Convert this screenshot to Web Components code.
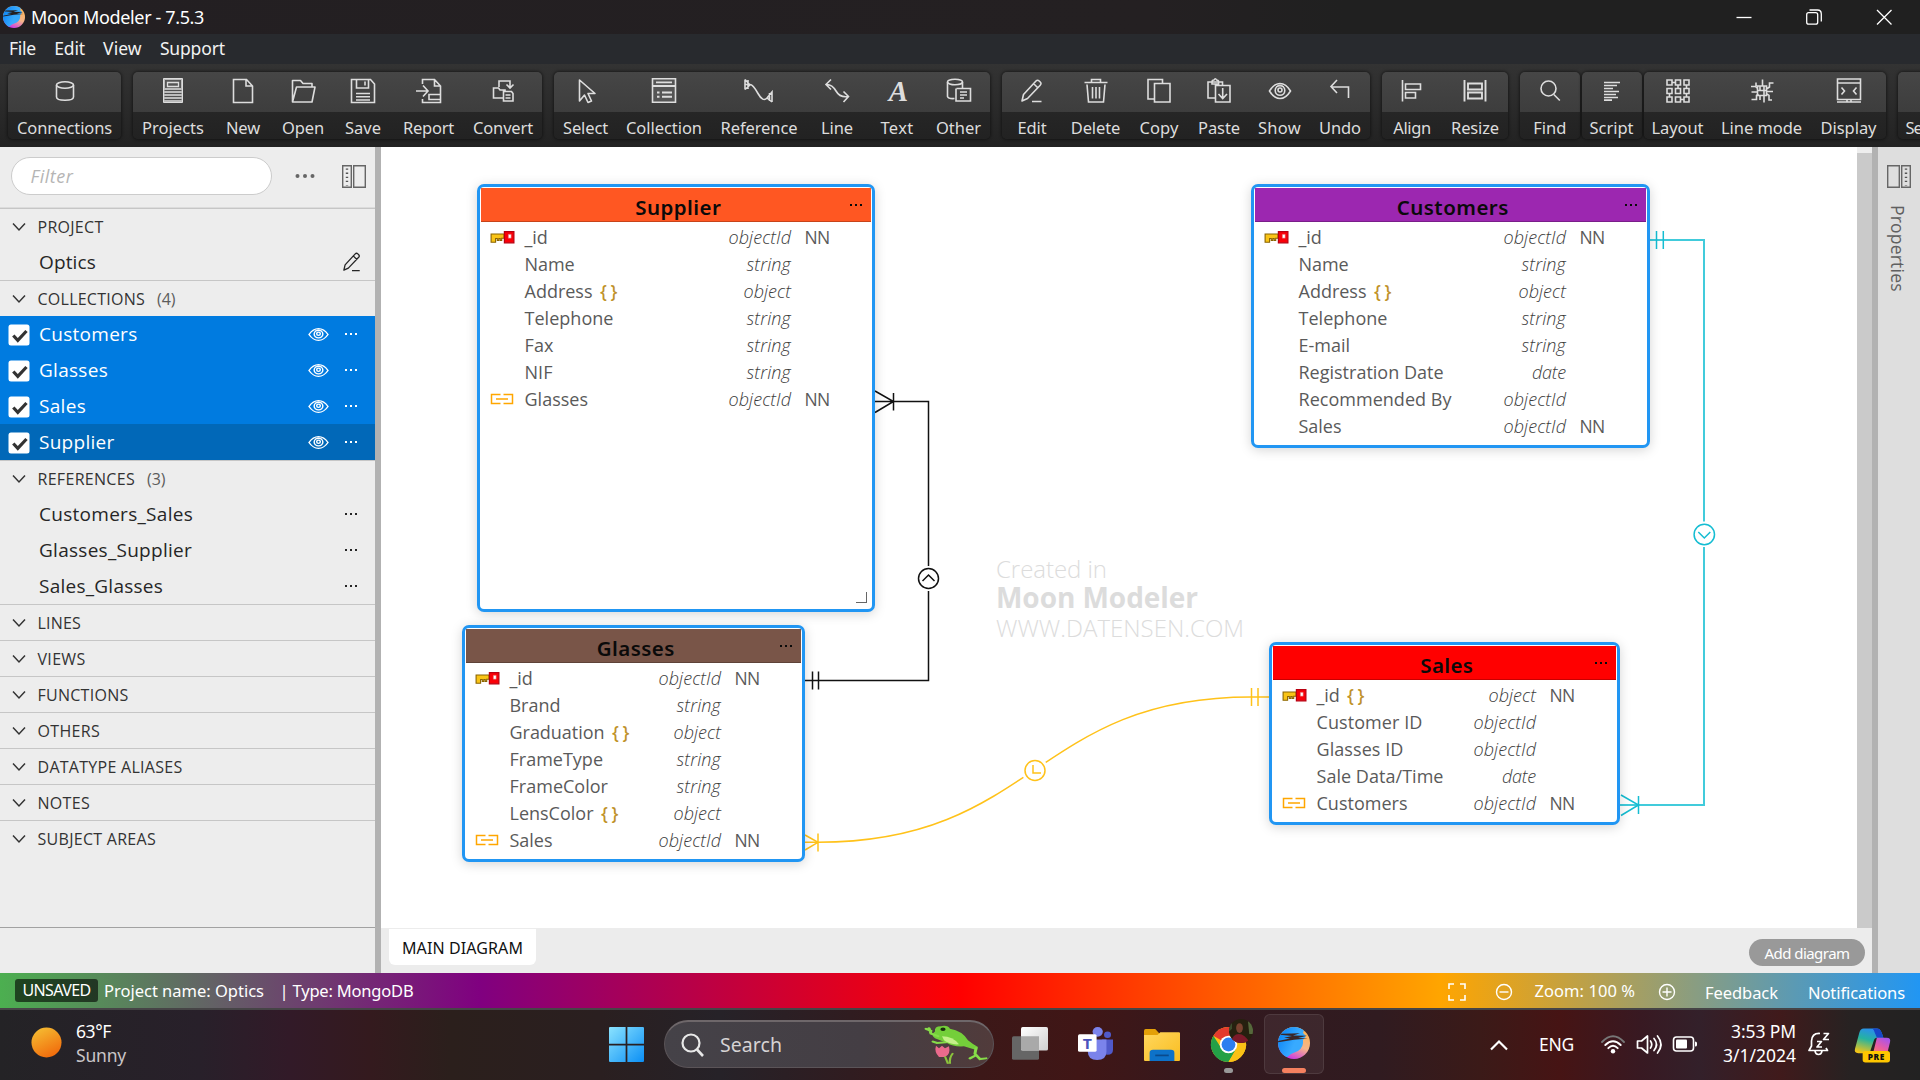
<!DOCTYPE html>
<html lang="en">
<head>
<meta charset="utf-8">
<title>Moon Modeler</title>
<style>
html,body{margin:0;padding:0;width:1920px;height:1080px;overflow:hidden;font-family:"Noto Sans","Open Sans",sans-serif;background:#222}
</style>
</head>
<body>
<moon-app></moon-app>
<script>
const define = (name, html, extra) => {
  const tpl = document.createElement('template');
  tpl.innerHTML = html;
  customElements.define(name, class extends HTMLElement {
    connectedCallback() {
      if (this.shadowRoot) return;
      const root = this.attachShadow({mode: 'open'});
      root.appendChild(tpl.content.cloneNode(true));
      if (extra) extra.call(this, root);
    }
  });
};

/* Text with a fixed advance width: tracking is spread over its characters. */
define('t-x', `<style>:host{display:inline-block;white-space:pre;flex:none}span{display:inline-block;white-space:pre}</style><span><slot></slot></span>`, function (root) {
  const w = parseFloat(this.getAttribute('w'));
  if (!w) return;
  const s = root.querySelector('span');
  const n = this.textContent.length;
  const nat = s.getBoundingClientRect().width;
  this.style.width = w + 'px';
  s.style.letterSpacing = ((w - nat) / n).toFixed(3) + 'px';
});

const moon = bg => `<defs><linearGradient id="ma" x1="0" y1=".2" x2="1" y2=".7"><stop offset="0" stop-color="#0a84f5"/><stop offset=".6" stop-color="#38aaff"/></linearGradient><linearGradient id="mb" x1=".8" y1="0" x2=".35" y2="1"><stop offset="0" stop-color="#ffb54d"/><stop offset=".55" stop-color="#f7b58a"/><stop offset="1" stop-color="#c832ea"/></linearGradient><clipPath id="mc"><circle cx="16" cy="16" r="16"/></clipPath></defs>
<g clip-path="url(#mc)"><path d="M0 0h32v32H0z" fill="url(#mb)"/><path d="M0 0H27L25 6 28 9 25 13Q26 20 20 24L13 27 8 31 0 32Z" fill="url(#ma)"/><path d="M0 6l4 .7 18-.4-7 2.200 14 .2-9 2.200 10 .7-14 1.200L0 15.300v-1.300l12-2.500-6-.8 8-1.800L0 7.600z" fill="${bg}"/></g>`;

const L = 'fill="none" stroke="currentColor" stroke-width="1.6"';
const pencil = `<g ${L} stroke-linejoin="round"><path d="M6 26l1.500-6.500L20 6q1.500-1.600 3.200 0l1 1q1.600 1.600 0 3.200L11.500 23.500 6 26zM17.500 8.500l4.500 4.500M16 26.500h9.500"/></g>`;
const eye = `<g ${L}><path d="M5.500 16Q10 8.500 16 8.500T26.500 16Q22 23.500 16 23.500T5.500 16Z"/><circle cx="16" cy="15.500" r="4.800"/><circle cx="16" cy="15" r="2"/><path d="M12 12q4-4 8 0" stroke-width="1"/></g>`;
const panel = `<g fill="none" stroke="#666" stroke-width="1.400"><path d="M4.700 5.700h8.600v21.600H4.700zM15.700 5.700h11.600v21.600H15.700z"/><path d="M9 8.500v17" stroke="#555" stroke-width="2.400" stroke-dasharray="1.300 2.800"/></g>`;
const ICONS = {
  moon: moon('#231f22'), moont: moon('#3a2526'),
  db: `<g ${L}><ellipse cx="16" cy="10" rx="8.500" ry="3.300"/><path d="M7.500 10v12q0 3.300 8.500 3.300t8.500-3.300V10"/></g>`,
  projects: `<path d="M6.500 3.500h19v24h-19z" fill="#bbb" stroke="#ddd" stroke-width="1"/><path d="M8 5h16v8H8z" fill="#555"/><path d="M10.500 7.500h11v4h-11z" fill="none" stroke="#ddd" stroke-width="1.300"/><path d="M7.500 15.500h17M7.500 18.500h17M7.500 21.500h17M7.500 24.500h17" stroke="#505050" stroke-width="1"/>`,
  new: `<g ${L}><path d="M6.500 4.500h13l6 6.500v16.500h-19zM19 4.500V11h6.500"/></g>`,
  open: `<g ${L} stroke-linejoin="round"><path d="M5.500 27V5.500h8l2.500 3h9V12M5.500 27l4-15h18.500l-3 15H5.500z"/></g>`,
  save: `<g ${L}><path d="M4.500 4.500h19L27.500 9v18.500h-23zM9.500 4.500v8.500h12V4.500M9 18.500h14M9 21.700h14M9 25h14" /><path d="M18 6.500v4"/></g>`,
  report: `<g ${L}><path d="M9.500 9V4.500h12l6 6.500v16.500h-18V24M21.500 4.500V11h6M16 19.500h11.500v5H16zM3 16h11M10 10.500l5 5.500-5 5.500"/></g>`,
  convert: `<g ${L}><path d="M12 12V6h11v6M19.500 9.500L23 13l3.500-3.500M16 23H6.500V13h5l1.500 2h5v2M16.500 16.500h8l1.500 2v7.500h-9.500zM18.500 20h5M18.500 23h5"/></g>`,
  select: `<g ${L} stroke-linejoin="round"><path d="M9.500 5v21l5-6 3.500 7.500 3.500-1.500-3.500-7.500h7z"/></g>`,
  collection: `<g ${L}><path d="M4.500 3.700h23v23.600h-23z" fill="#555"/><path d="M4.500 11h23M8 7.300h16" stroke-width="1.800"/><path d="M14 17.500h10M14 21.700h10M9 17.500h2.500M9 21.700h2.500" stroke-width="2"/></g>`,
  reference: `<g ${L}><path d="M2 4.500v10M2 4.500l5 5.500M2 14.500L7 10M2 9.500h5q3 0 8 9t9 4.500L29 17v10M24 23l5 4M5 5v9M26.500 18v8"/></g>`,
  line: `<g ${L}><path d="M10 4.500L5 9.500l5 5M5 9.500q6-.5 10 6.500t12.500 5.500M22.500 16.500l5 5-5 5.500"/></g>`,
  text: `<text x="17.500" y="25.500" text-anchor="middle" font-family="Liberation Serif,serif" font-weight="bold" font-style="italic" font-size="29" fill="#ddd">A</text>`,
  other: `<g ${L}><ellipse cx="12" cy="7" rx="7.500" ry="2.800"/><path d="M4.500 7v14.500q1 2.500 7 2M19.500 7v6M13.500 13.500h14v12.500H13v-12.500M17 17h7M17 20h7M17 23h4"/></g>`,
  edit: pencil, eye,
  trash: `<g ${L}><path d="M4.500 7.500h23M11.500 7V4.500h9V7M7 9.500l1.500 17.500h15L25 9.500M12.500 12v11.500M16 12v11.500M19.500 12v11.500" /></g>`,
  copy: `<g ${L}><path d="M11.500 24h-6.500V4.500h14.500V8M11.500 8.500h15.500v18.500h-15.500z"/></g>`,
  paste: `<g ${L}><path d="M13 23H5V7h14.500v3M9 7q0-2 2-2 1.300-2.500 2.600 0 2 0 2 2v2H9zM12.500 10.500H27V27H12.500zM19.700 13v10M15.500 19l4.200 4.500L24 19"/></g>`,
  undo: `<g ${L}><path d="M13 5l-6 6.500 6 6.500M7.500 12H24.500v11"/></g>`,
  align: `<g ${L}><path d="M6.500 5v21.500M9.500 9h15v5.500h-15zM9.500 17.500h10v5.500h-10z"/></g>`,
  resize: `<g ${L}><path d="M5.500 5v21.500M26.500 5v21.500M9 8.500h14v6H9zM9 17.500h14v6H9z" stroke-width="1.900"/></g>`,
  find: `<g ${L}><circle cx="14.500" cy="13.500" r="7.500"/><path d="M19.800 19.500l6 6"/></g>`,
  script: `<path d="M8 7.500h16M8 10.500h13M8 13.500h9M8 16.500h15M8 19.500h12M8 22.500h14M8 25.200h8" stroke="#ddd" stroke-width="1.700"/>`,
  layout: `<g ${L} stroke-width="1.800"><path d="M5 5h5v5H5zM13.500 5h5v5h-5zM22 5h5v5h-5zM5 13.500h5v5H5zM13.500 13.500h5v5h-5zM22 13.500h5v5h-5zM5 22h5v5H5zM13.500 22h5v5h-5zM22 22h5v5h-5zM10 7.500h3.500M18.500 24.500H22M16 10v3.500M24.500 10v3.500M7.500 18.500V22M24.500 18.500V22"/></g>`,
  mode: `<g ${L}><path d="M11.500 11h9v9.500h-9zM16.500 4.500v6M5 11.500h4.500l2 2M10 11V7.500M27.500 8h-4v4l-3 2M5.500 17h6M27 16.500h-6.500M5.500 24.500h5v-4l2-1.500M26 25h-3v-4.500l-2.500-2M14 20.500V25M18 20.500V27.500M12 15.500h8M14 11v4M18 11v9"/></g>`,
  display: `<g ${L}><path d="M4.500 4h23v20.500h-23zM4.500 8h23M4 27h24M14 24.500V27M18 24.500V27" /><path d="M8.500 12.500l3 3.500-3 3.500M23.500 12.500l-3 3.500 3 3.500"/></g>`,
  panel,
  panelr: `<g transform="translate(32 0) scale(-1 1)">${panel}</g>`,
  chev: `<path d="M10 12.500l6 6.500 6-6.500" fill="none" stroke="#333" stroke-width="1.500"/>`,
  dots: `<g fill="currentColor"><path d="M10 15h2v2h-2zM15 15h2v2h-2zM20 15h2v2h-2z"/></g>`,
  more: `<g fill="#666"><circle cx="8.500" cy="16" r="2"/><circle cx="16" cy="16" r="2"/><circle cx="23.500" cy="16" r="2"/></g>`,
  check: `<rect x="5.500" y="5.500" width="21" height="21" rx="2.500" fill="#fff"/><path d="M10.300 16.500l4.500 4.800 8.700-9.300" fill="none" stroke="#333" stroke-width="3.200"/>`,
  key: `<path d="M5.100 13h13v4.200h-2.400v2.300h-1.500v-2h-1.400v2h-1.500v-2H9.600v3.800H5.100z" fill="#f9c416" stroke="#8a6400" stroke-width="1.100"/><path d="M18.400 10.600h9.500v11.200h-9.500z" fill="#fa0008" stroke="#b80010" stroke-width="1.200"/><path d="M22.300 13.300h2.900v3.900h-2.900z" fill="#fff" stroke="#d55" stroke-width=".5"/>`,
  link: `<path d="M14.500 11.500H5.500v9h9M17.500 11.500h9v9h-9M10 16h12" fill="none" stroke="#ffa600" stroke-width="1.500"/>`,
  win: `<defs><linearGradient id="w" x1="0" y1="0" x2="1" y2="1"><stop offset="0" stop-color="#8be3ff"/><stop offset="1" stop-color="#0b8ff5"/></linearGradient></defs><path d="M0 1q0-1 1-1h14.200v15.200H0zM16.800 0H31q1 0 1 1v14.200H16.800zM0 16.800h15.200V32H1q-1 0-1-1zM16.800 16.800H32V31q0 1-1 1H16.800z" fill="url(#w)"/>`,
  expand: `<path d="M8 13V8h5M19 8h5v5M24 19v5h-5M13 24H8v-5" fill="none" stroke="#fff" stroke-width="1.600"/>`,
  minus: `<g fill="none" stroke="#fff" stroke-width="1.400"><circle cx="16" cy="16" r="7.500"/><path d="M11.500 16h9"/></g>`,
  plus: `<g fill="none" stroke="#fff" stroke-width="1.400"><circle cx="16" cy="16" r="7.500"/><path d="M11.500 16h9M16 11.500v9"/></g>`,
  sun: `<defs><linearGradient id="s" x1=".2" y1="0" x2=".7" y2="1"><stop offset="0" stop-color="#f5bd32"/><stop offset="1" stop-color="#f1690b"/></linearGradient></defs><circle cx="16" cy="16" r="15.500" fill="url(#s)"/>`,
  taskview: `<defs><linearGradient id="tv" x1="0" y1="0" x2="1" y2="1"><stop offset="0" stop-color="#fff"/><stop offset="1" stop-color="#cfcfcf"/></linearGradient></defs><rect y="8.500" width="24" height="21.500" rx="1.500" fill="#666"/><rect x="8" y="0" width="24" height="21.500" rx="1.500" fill="url(#tv)"/><path d="M8 8.500h16v13H9.500q-1.500 0-1.500-1.500z" fill="#a9a9a9"/>`,
  teams: `<circle cx="27" cy="7.500" r="3.200" fill="#5059c9"/><circle cx="18" cy="4.700" r="4.700" fill="#7b83eb"/><path d="M22 12h10v10q0 5-5 5t-5-5z" fill="#5059c9"/><path d="M9 12h17v12q0 8-8.500 8T9 24z" fill="#7b83eb"/><rect y="7" width="17" height="17" rx="1.500" fill="#fff"/><text x="8.500" y="21" text-anchor="middle" font-family="Open Sans,sans-serif" font-weight="700" font-size="14.500" fill="#4b53bc">T</text>`,
  folder: `<defs><linearGradient id="f" x1="0" y1="0" x2="1" y2="1"><stop offset="0" stop-color="#ffd75e"/><stop offset="1" stop-color="#f9bd20"/></linearGradient></defs><path d="M0 2.500Q0 1 1.500 1H10l3.500 4v3H0z" fill="#e3a008"/><path d="M0 6.500h12L14.500 4H31q1 0 1 1v25q0 1-1 1H1q-1 0-1-1z" fill="url(#f)"/><path d="M5 31v-7.500Q5 20.500 8 20.500h16q3 0 3 3V31z" fill="#0d72c9"/><path d="M10 25.800h12" stroke="#0a4a8c" stroke-width="1.600"/>`,
  chrome: `<circle cx="16" cy="16" r="16" fill="#fbc116"/><path d="M16 16L2.100 8A16 16 0 0 1 29.900 8z" fill="#e33b2e"/><path d="M2.100 8A16 16 0 0 0 16 32l7-12-7 3.500-6.500-4z" fill="#23a047"/><path d="M29.900 8H16l7 12-7 12A16 16 0 0 0 29.900 8z" fill="#fbc116"/><circle cx="16" cy="16" r="8" fill="#fff"/><circle cx="16" cy="16" r="6.300" fill="#2d7ff0"/>`,
  avatar: `<clipPath id="av"><circle cx="16" cy="16" r="16"/></clipPath><g clip-path="url(#av)"><path d="M0 0h32v32H0z" fill="#26200f"/><path d="M25 0h7v20h-5z" fill="#56683c"/><path d="M0 4l4-3v12l-4 4z" fill="#3b4a2b"/><ellipse cx="14" cy="12" rx="4.500" ry="6.500" fill="#7a4230"/><path d="M2 32Q5 20 13 20t15 12z" fill="#7c1a2a"/></g>`,
  up: `<path d="M8 20.500l8-8 8 8" fill="none" stroke="#fff" stroke-width="2.200"/>`,
  wifi: `<g fill="none" stroke-width="1.900" stroke-linecap="round"><path d="M5 14Q16 2.500 27 14" stroke="#777"/><path d="M8.300 17Q16 9.500 23.700 17M11.300 20.200Q16 15.500 20.700 20.200" stroke="#fff"/></g><circle cx="16" cy="23.300" r="2.200" fill="#fff"/>`,
  sound: `<g fill="none" stroke="#fff" stroke-width="1.700" stroke-linejoin="round" stroke-linecap="round"><path d="M4.500 13h4l6-5v17l-6-5h-4zM17.500 13q2.500 3.500 0 7M21 10.500q5 6 0 12M24.500 8q7 8.500 0 17"/></g>`,
  battery: `<rect x="4.500" y="9" width="20" height="14" rx="3" fill="none" stroke="#fff" stroke-width="1.600"/><rect x="7" y="11.500" width="11" height="9" rx="1" fill="#fff"/><path d="M26 13.500q2 0 2 1.500v2q0 1.500-2 1.500z" fill="#fff"/>`,
  bell: `<g fill="none" stroke="#fff" stroke-width="1.700" stroke-linejoin="round"><path d="M17 5.500Q9 5 8.500 13v5L6 22.500h18.500L23 20M12 23q.5 3.500 3.500 3.500T19 23M14 13.500h4.500l-4.500 5.500h5M20.500 5.500h5l-5 6h5.500"/></g>`,
  copilot: `<defs><linearGradient id="c1" x1=".6" y1="0" x2=".3" y2="1"><stop offset="0" stop-color="#2a8cf0"/><stop offset=".45" stop-color="#25b3a0"/><stop offset="1" stop-color="#f3c416"/></linearGradient><linearGradient id="c2" x1=".8" y1="0" x2=".2" y2="1"><stop offset="0" stop-color="#a654ee"/><stop offset=".5" stop-color="#e85ba5"/><stop offset="1" stop-color="#ff8a50"/></linearGradient></defs><path d="M8 .5h12q3 0 4.500 4L26 9h-6q-2 0-3 3l-3 9q-1 2-3 2H3q-4 0-3-4L4 4Q5 .5 8 .5z" fill="url(#c1)"/><path d="M16 .5h4q3 0 4.500 4L26 9h-6l-2-5q-.5-2-2-3.500z" fill="#1746c8"/><path d="M20 9h9q4 0 3 4l-2 8q-1 4-5 4H13q3 0 4-4z" fill="url(#c2)"/><rect x="7" y="21" width="25" height="10.500" rx="2.500" fill="#ffc700"/><text x="19.500" y="29" text-anchor="middle" font-family="Open Sans,sans-serif" font-weight="800" font-size="7.600" letter-spacing=".5" fill="#111">PRE</text>`,
  frog: `<g transform="translate(0 -1) scale(.533 .58)"><path d="M14 48q-5-8-3-17l3 4 3-4 3 4 4-3q2 12-4 16z" fill="#ea6a8c"/><path d="M20 47L23 58M25 58q-1-9 3-16" stroke="#8bc33c" stroke-width="2.200" fill="none"/><path d="M10 10Q9 2 16 2q7-2 9 4 12 3 18 17 4 5 10 10l-1 5-13-6q-11 1-17-5L10 20q-5-5 0-10z" fill="#74cf3a"/><path d="M13 17L6 13 4 5M6 9L1 6M21 26l-9 1-4-2M51 35l-1 8 5 8 6-1M50 46l-5 4" stroke="#86dc48" stroke-width="3" fill="none" stroke-linecap="round"/><path d="M17 17q11 0 17 12-9 1-15-6z" fill="#c5f08a"/><circle cx="18" cy="6.500" r="2.600" fill="#192d0c"/></g>`,
  min: `<path d="M8.500 16.500h15" stroke="#fff" stroke-width="1.300"/>`,
  restore: `<g fill="none" stroke="#fff" stroke-width="1.300"><rect x="8.700" y="11.700" width="11" height="11.500" rx="2"/><path d="M11.500 9h8Q23.300 9 23.300 13v7.500"/></g>`,
  close: `<path d="M9 9l14.500 14.500M23.500 9L9 23.500" stroke="#fff" stroke-width="1.300"/>`
};
define('ui-icon', `<style>:host{display:block;flex:none;line-height:0}svg{display:block;overflow:visible}</style>`, function (root) {
  const w = this.getAttribute('size') || 32, h = this.getAttribute('h') || w;
  const box = document.createElement('div');
  box.innerHTML = `<svg width="${w}" height="${h}" viewBox="0 0 32 32" preserveAspectRatio="none">${ICONS[this.getAttribute('name')]}</svg>`;
  root.appendChild(box.firstChild);
});

define('title-bar', `<style>
:host{display:flex;height:34px;background:linear-gradient(90deg,#231f22 0,#242022 60%,#202020 70%);color:#fff;font-size:18px;line-height:35px;align-items:center}
.l{margin-left:3px}.t{margin-left:6px}.s{flex:1}.w{display:flex;gap:38px;margin-right:20.500px}
</style><ui-icon class="l" name="moon" size="22"></ui-icon><t-x class="t" w="173">Moon Modeler - 7.5.3</t-x><div class="s"></div>
<div class="w"><ui-icon name="min"></ui-icon><ui-icon name="restore"></ui-icon><ui-icon name="close"></ui-icon></div>`);

define('menu-bar', `<style>:host{display:flex;height:30px;background:#282a2e;color:#f2f2f2;font-size:17.500px;line-height:29px;padding-left:9px;box-sizing:border-box;gap:18.300px}</style>
<t-x w="27">File</t-x><t-x w="30.500">Edit</t-x><t-x w="38.500">View</t-x><t-x w="65">Support</t-x>`);

define('tool-group', `<style>:host{display:flex;flex:none;height:67px;border-radius:5px;overflow:hidden;background:linear-gradient(#464646,#3d3d3d 40px,#262626 40px,#222);box-shadow:0 0 3px 1px rgba(0,0,0,.45)}</style><slot></slot>`);
define('tool-item', `<style>:host{display:flex;flex-direction:column;align-items:center;flex:none;color:#ddd}ui-icon{margin-top:3px}
.l{margin-top:7px;font-size:16.500px;line-height:27px;height:25px}</style><ui-icon></ui-icon><div class="l"><t-x></t-x></div>`, function (root) {
  this.style.width = this.getAttribute('cell') + 'px';
  const i = document.createElement('ui-icon'); i.setAttribute('name', this.getAttribute('icon'));
  root.querySelector('ui-icon').replaceWith(i);
  const t = document.createElement('t-x'); t.setAttribute('w', this.getAttribute('w')); t.textContent = this.getAttribute('label');
  root.querySelector('t-x').replaceWith(t);
});
const groups = [
  [12, [['Connections', 'db', 113, 95]]],
  [12, [['Projects', 'projects', 80, 62], ['New', 'new', 60, 34], ['Open', 'open', 60, 42], ['Save', 'save', 60, 36], ['Report', 'report', 71, 51], ['Convert', 'convert', 78, 60]]],
  [12, [['Select', 'select', 63, 45], ['Collection', 'collection', 94, 76], ['Reference', 'reference', 96, 77], ['Line', 'line', 60, 32], ['Text', 'text', 60, 33], ['Other', 'other', 63, 45]]],
  [12, [['Edit', 'edit', 60, 29], ['Delete', 'trash', 67, 49.500], ['Copy', 'copy', 60, 39], ['Paste', 'paste', 60, 42], ['Show', 'eye', 61, 43], ['Undo', 'undo', 60, 42]]],
  [12, [['Align', 'align', 60, 37.500], ['Resize', 'resize', 66, 48]]],
  [2, [['Find', 'find', 59.500, 33]]],
  [2, [['Script', 'script', 60, 44]]],
  [12, [['Layout', 'layout', 68, 52], ['Line mode', 'mode', 100, 81], ['Display', 'display', 74, 56]]],
  [0, []]
];
define('tool-bar', `<style>:host{display:flex;height:83px;box-sizing:border-box;padding:8px 0 0 8px;background:linear-gradient(#333,#222);overflow:hidden}</style>` +
  groups.map(([gap, items], gi) => `<tool-group style="margin-right:${gap}px">` + (gi === 8 ? `<div style="width:60px;padding:42px 0 0 8px;font-size:16.500px;line-height:27px;color:#ddd;white-space:nowrap"><t-x w="16.500">Se</t-x></div>` :
    items.map(([l, i, c, w]) => `<tool-item label="${l}" icon="${i}" cell="${c}" w="${w}"></tool-item>`).join('')) + `</tool-group>`).join(''));

define('side-section', `<style>:host{display:block}
.h{display:flex;align-items:center;height:36px;box-sizing:border-box;border-top:1px solid var(--line,#c6c6c6);font-size:16px;line-height:35px;color:#333;font-family:"Open Sans","Noto Sans",sans-serif}
ui-icon{margin-left:2.500px;margin-right:3px}.t{display:flex;padding-top:1px;height:34px}.c{margin-left:12px;color:#5c5c5c}</style>
<div class="h"><ui-icon name="chev"></ui-icon><div class="t"><slot name="t"></slot><span class="c"></span></div></div><slot></slot>`, function (root) {
  root.querySelector('.c').textContent = this.getAttribute('count') || '';
});
define('side-item', `<style>:host{display:flex;height:36px;align-items:center;font-size:19px;line-height:37px;color:#262626;font-family:"Open Sans","Noto Sans",sans-serif;box-sizing:border-box}
:host([sel]){background:#007be0;color:#fff;font-weight:500;--sw:2}:host([cur]){background:#0168b8}
.k{width:39px;flex:none}.k ui-icon{margin-left:2.500px;margin-top:1px}.t{height:36px}.s{flex:1}.r{display:flex;align-items:center}.e{margin-right:1px}</style>
<div class="k"></div><div class="t"><slot></slot></div><div class="s"></div><div class="r"></div>`, function (root) {
  const sel = this.hasAttribute('sel');
  if (sel) root.querySelector('.k').innerHTML = '<ui-icon name="check"></ui-icon>';
  root.querySelector('.r').innerHTML = this.hasAttribute('pen') ? '<ui-icon name="edit" size="26" style="margin-right:10.500px;margin-top:-1px"></ui-icon>' :
    (sel ? '<ui-icon name="eye" size="29" h="25" style="margin-right:2px"></ui-icon>' : '') + '<ui-icon name="dots" style="margin-right:8.500px;margin-top:-1px"></ui-icon>';
});
define('side-bar', `<style>:host{display:flex;flex-direction:column;width:375px;flex:none;background:#ededed}
.f{display:flex;height:60px;align-items:flex-start;padding:10px 0 0 11px;box-sizing:border-box}
.i{width:261px;height:38px;box-sizing:border-box;border:1.500px solid #ccc;border-radius:19px;background:#fff;color:#b5b5b5;font-family:"Open Sans","Noto Sans",sans-serif;font-style:italic;font-size:18px;line-height:36px;padding-left:18.500px}
.m{margin:3px 0 0 16.500px}.p{margin:3px 0 0 17px}.g{flex:1;border-bottom:1px solid #a2a2a2}.b{height:45px}</style>
<div class="f"><div class="i"><t-x w="43">Filter</t-x></div><ui-icon class="m" name="more"></ui-icon><ui-icon class="p" name="panel"></ui-icon></div>
<div style="height:1px;background:#dcdcdc"></div>
<side-section><t-x slot="t" w="66">PROJECT</t-x><side-item pen><t-x w="57">Optics</t-x></side-item></side-section>
<side-section count="(4)"><t-x slot="t" w="107.500">COLLECTIONS</t-x>
<side-item sel><t-x w="98.500">Customers</t-x></side-item><side-item sel><t-x w="69">Glasses</t-x></side-item><side-item sel><t-x w="47">Sales</t-x></side-item><side-item sel cur><t-x w="75.500">Supplier</t-x></side-item></side-section>
<side-section count="(3)"><t-x slot="t" w="97.500">REFERENCES</t-x>
<side-item><t-x w="154">Customers_Sales</t-x></side-item><side-item><t-x w="153">Glasses_Supplier</t-x></side-item><side-item><t-x w="124">Sales_Glasses</t-x></side-item></side-section>
<side-section><t-x slot="t" w="43.500">LINES</t-x></side-section><side-section><t-x slot="t" w="48">VIEWS</t-x></side-section><side-section><t-x slot="t" w="91">FUNCTIONS</t-x></side-section><side-section><t-x slot="t" w="62.500">OTHERS</t-x></side-section><side-section><t-x slot="t" w="145">DATATYPE ALIASES</t-x></side-section><side-section><t-x slot="t" w="52.500">NOTES</t-x></side-section><side-section><t-x slot="t" w="118.500">SUBJECT AREAS</t-x></side-section>
<div class="g"></div><div class="b"></div>`);

const TW = {objectId: 62.500, string: 44.500, object: 47.500, date: 34};
define('db-field', `<style>:host{display:flex;height:27px;line-height:27px;font-size:18px;color:#5a5a5a;font-family:"Open Sans","Noto Sans",sans-serif;align-items:center}
.k{width:43.500px;flex:none}.k ui-icon{margin:0 0 0 4.500px}.x,.b,.t,.n{position:relative;top:1px}.b{color:#c0922a;margin-left:7.500px;font-family:"Noto Sans",sans-serif;font-weight:500}.s{flex:1}.t{font-style:italic;font-size:18px;left:.5px;top:.5px;font-weight:300;color:#3c3c3c}.n{width:64.500px;padding-left:14px;box-sizing:border-box;font-size:17.500px;top:.5px}</style>
<div class="k"></div><div class="x"><slot></slot></div><div class="b"></div><div class="s"></div><div class="t"></div><div class="n"></div>`, function (root) {
  const g = a => this.getAttribute(a), q = s => root.querySelector(s);
  if (g('icon')) q('.k').innerHTML = `<ui-icon name="${g('icon')}"></ui-icon>`;
  if (this.hasAttribute('obj')) q('.b').innerHTML = '<t-x w="17">{ }</t-x>';
  q('.t').innerHTML = `<t-x w="${TW[g('type')]}">${g('type')}</t-x>`;
  if (this.hasAttribute('nn')) q('.n').innerHTML = '<t-x w="25">NN</t-x>';
});
define('db-table', `<style>:host{position:absolute;box-sizing:border-box;border:3px solid #2196f3;border-radius:7px;background:#fff;box-shadow:0 2px 12px rgba(0,0,0,.17);padding:1px}
.h{height:34px;box-sizing:border-box;border-bottom:1px solid rgba(0,0,0,.22);display:flex;align-items:center;justify-content:center;font-size:20.500px;font-weight:600;line-height:30px;color:#0a0a0a}
.c{flex:1;text-align:center;padding:4px 0 0 35px}.d{margin:0 -.5px 0 -1px}
.f{padding:1px 16px 0 0}
.r{position:absolute;right:5px;bottom:6px;width:10.500px;height:10px;border-right:1.500px solid #666;border-bottom:1.500px solid #666}</style>
<div class="h"><div class="c"><slot name="title"></slot></div><ui-icon class="d" name="dots"></ui-icon></div><div class="f"><slot></slot></div>`, function (root) {
  const [x, y, w, h] = this.getAttribute('box').split(' ').map(Number);
  Object.assign(this.style, {left: x - 381 + 'px', top: y - 147 + 'px', width: w + 'px', height: h + 'px'});
  root.querySelector('.h').style.background = this.getAttribute('color');
  if (this.hasAttribute('grip')) { const r = document.createElement('div'); r.className = 'r'; root.appendChild(r); }
});
const field = (n, w, type, flags = '') => `<db-field type="${type}" ${flags}><t-x w="${w}">${n}</t-x></db-field>`;
const table = (title, tw, box, color, rows, flags = '') => `<db-table box="${box}" color="${color}" ${flags}><t-x slot="title" w="${tw}">${title}</t-x>${rows.map(r => field(...r)).join('')}</db-table>`;
define('diagram-canvas', `<style>:host{display:block;position:relative;flex:1;background:#fff;overflow:hidden}svg{position:absolute;left:0;top:0}
.w{position:absolute;left:615px;top:405px;color:#dcdcdc;font-family:"Open Sans","Noto Sans",sans-serif;display:flex;flex-direction:column}</style>
<div class="w"><t-x w="111" style="font-size:24px;line-height:34px;font-weight:300">Created in</t-x><t-x w="202" style="font-size:28px;line-height:28px;margin-top:-3px;font-weight:700">Moon Modeler</t-x><t-x w="248" style="font-size:24px;line-height:34px;font-weight:300">WWW.DATENSEN.COM</t-x></div>
<svg width="1476" height="781" viewBox="381 147 1476 781" fill="none">
<g stroke="#111" stroke-width="1.500"><path d="M875 401.500H928.500V566M928.500 591V680.500H805M893.500 393v17.500M875 391l18.500 10.500L875 412.500M812.500 671.500v18M818.500 671.500v18"/><circle cx="928.500" cy="578.500" r="10"/><path d="M922.500 581l6-6 6 6"/></g>
<g stroke="#15bdd2" stroke-width="1.500"><path d="M1650 240H1704V521.500M1704 547V805H1620" stroke="#41cbdb" stroke-width="2"/><path d="M1656.500 231v18M1663.300 231v18M1638.500 796v18M1621 795l17.500 10-17.500 10.500"/><circle cx="1704.300" cy="534.500" r="10.200"/><path d="M1698.300 532l6 6 6-6"/></g>
<g stroke="#ffc21a" stroke-width="1.500"><path d="M805 842.300H818C1035 842.300 1035 697 1251 697H1269"/><path d="M1251.500 688v18M1258 688v18M818 833.500v18M805 835l13 7.300-13 7.700"/><circle cx="1035" cy="770.500" r="13.500" fill="#fff" stroke="none"/><circle cx="1035" cy="770.500" r="10"/><path d="M1033 765v8h8"/></g></svg>` +
table('Supplier', 86, '477 184 398 428', '#ff5722', [['_id', 23, 'objectId', 'icon="key" nn'], ['Name', 50, 'string'], ['Address', 68, 'object', 'obj'], ['Telephone', 89, 'string'], ['Fax', 29, 'string'], ['NIF', 28, 'string'], ['Glasses', 63.500, 'objectId', 'icon="link" nn']], 'grip') +
table('Glasses', 78, '462 625 343 237', '#795548', [['_id', 23, 'objectId', 'icon="key" nn'], ['Brand', 51, 'string'], ['Graduation', 95, 'object', 'obj'], ['FrameType', 93.500, 'string'], ['FrameColor', 98.500, 'string'], ['LensColor', 84, 'object', 'obj'], ['Sales', 43, 'objectId', 'icon="link" nn']]) +
table('Customers', 112, '1251 184 399 264', '#9c27b0', [['_id', 23, 'objectId', 'icon="key" nn'], ['Name', 50, 'string'], ['Address', 68, 'object', 'obj'], ['Telephone', 89, 'string'], ['E-mail', 51.500, 'string'], ['Registration Date', 145, 'date'], ['Recommended By', 153, 'objectId'], ['Sales', 43, 'objectId', 'nn']]) +
table('Sales', 53, '1269 642 351 183', '#ff0000', [['_id', 23, 'object', 'icon="key" obj nn'], ['Customer ID', 106, 'objectId'], ['Glasses ID', 87, 'objectId'], ['Sale Data/Time', 127, 'date'], ['Customers', 91, 'objectId', 'icon="link" nn']]));

define('tab-strip', `<style>:host{display:flex;height:45px;background:#ececec;justify-content:space-between;box-sizing:border-box;padding:1px 7px 0 8px}
.t{width:147px;height:36px;background:#fff;border-radius:0 0 6px 6px;color:#111;font-size:16px;line-height:38px;padding-left:13px;box-sizing:border-box}
.a{width:116px;height:27px;margin-top:10px;border-radius:14px;background:#999;color:#fff;font-size:15px;line-height:28px;text-align:center}</style>
<div class="t"><t-x w="121">MAIN DIAGRAM</t-x></div><div class="a"><t-x w="85">Add diagram</t-x></div>`);

define('properties-rail', `<style>:host{display:flex;flex-direction:column;width:42px;flex:none;background:#dedede;align-items:flex-start}
ui-icon{margin:13px 0 0 5px}.v{writing-mode:vertical-rl;margin:13px 0 0 6px;font-size:17.500px;line-height:28px;color:#606060;font-family:"Open Sans","Noto Sans",sans-serif;letter-spacing:.2px}</style><ui-icon name="panelr"></ui-icon><div class="v">Properties</div>`);

define('status-bar', `<style>:host{display:flex;height:35px;background:linear-gradient(90deg,#4caf50,purple 25%,red 50%,orange 75%,#2196f3);color:#fff;font-size:16.500px;line-height:35px;align-items:center}
.u{width:83px;height:23px;margin-left:15px;background:rgba(0,0,0,.6);border-radius:3px;font-size:16px;line-height:23px;text-align:center}
.s{flex:1}t-x{height:35px}.u t-x{height:23px}</style>
<div class="u"><t-x w="68">UNSAVED</t-x></div><t-x w="160" style="margin-left:6px">Project name: Optics</t-x><t-x w="134" style="margin-left:15.500px">| Type: MongoDB</t-x><div class="s"></div>
<ui-icon name="expand" style="margin:2px 0 0"></ui-icon><ui-icon name="minus" style="margin:2px 15px 0 14.500px"></ui-icon><t-x w="100.500">Zoom: 100 %</t-x><ui-icon name="plus" style="margin:2px 22px 0 16px"></ui-icon><t-x w="73" style="margin:3px 30px 0 0">Feedback</t-x><t-x w="97" style="margin:3px 15px 0 0">Notifications</t-x>`);

define('task-bar', `<style>:host{display:flex;height:72px;box-sizing:border-box;border-top:2px solid #464446;color:#fff;font-size:17.500px;align-items:center;
background:linear-gradient(90deg,#242326 0,#28202a 200px,#321a28 290px,#341a1e 370px,#2b1f1c 450px,#2a1f20 600px,#262228 720px,#301c20 850px,#3c1818 980px,#401616 1080px,#33191f 1220px,#301b20 1380px,#3b1a18 1480px,#461414 1560px,#381922 1640px,#33202a 1700px,#401a1b 1780px,#272222 1850px,#222 1920px)}
.w,.d{display:flex;flex-direction:column;line-height:24px}.w{margin:-5px 0 0 14px}.w t-x+t-x{color:#c9c5c7}
.q{display:flex;align-items:center;width:330px;height:48px;margin:-2px 18px 0 20.500px;box-sizing:border-box;border:1px solid #5b5458;border-top:2px solid #6e676a;border-radius:24px;background:linear-gradient(90deg,#454248,#443e44 60%,#513b3b);font-size:19.500px;line-height:46px;color:#d6d3d4;padding:0 8px 0 13px}
.ch{position:relative;height:70px;width:35px;margin:0 18px 0 31px}.ch ui-icon{position:absolute;left:0;top:17px}.ch ui-icon+ui-icon{left:18px;top:9px}.ch i{position:absolute;left:13px;top:58px;width:9px;height:5px;border-radius:3px;background:#999}
.mo{width:60px;height:60px;box-sizing:border-box;border:1px solid rgba(255,255,255,.09);border-radius:6px;background:rgba(255,255,255,.06);display:flex;flex-direction:column;align-items:center;padding-top:12px;margin-top:-2px}
.mo i{width:24px;height:5px;border-radius:3px;background:#f5805f;margin-top:9px}.s{flex:1}.d{text-align:right;align-items:flex-end;margin-top:-4px}</style>
<ui-icon name="sun" size="31" style="margin:-5px 0 0 31px"></ui-icon><div class="w"><t-x w="35">63°F</t-x><t-x w="50">Sunny</t-x></div>
<ui-icon name="win" size="35" style="margin:-1px 0 0 482.500px"></ui-icon>
<div class="q"><svg width="28" height="32" viewBox="0 0 28 32" fill="none" stroke="#e8e8e8"><circle cx="13" cy="14" r="8.500" stroke-width="2.200"/><path d="M19 20.500l6 6.500" stroke-width="2.600"/></svg><t-x w="62" style="margin-left:14px">Search</t-x><div class="s"></div><ui-icon name="frog" size="60" h="37"></ui-icon></div>
<ui-icon name="taskview" size="36" h="35" style="margin-top:-1px"></ui-icon><ui-icon name="teams" size="35" h="33" style="margin:-3px 0 0 30px"></ui-icon><ui-icon name="folder" size="36" h="34" style="margin:-1px 0 0 31px"></ui-icon>
<div class="ch"><ui-icon name="chrome" size="35"></ui-icon><ui-icon name="avatar" size="24"></ui-icon><i></i></div>
<div class="mo"><ui-icon name="moont" size="32"></ui-icon><i></i></div><div class="s"></div>
<ui-icon name="up" style="margin-right:24px"></ui-icon><t-x w="35" style="margin-top:-2px">ENG</t-x><ui-icon name="wifi" style="margin:-2px 0 0 23px"></ui-icon><ui-icon name="sound" style="margin:-2px 0 0 4px"></ui-icon><ui-icon name="battery" style="margin:-2px 0 0 4px"></ui-icon>
<div class="d" style="width:95px"><t-x w="65">3:53 PM</t-x><t-x w="73">3/1/2024</t-x></div>
<ui-icon name="bell" style="margin:-3px 0 0 7px"></ui-icon><ui-icon name="copilot" size="35" style="margin:0 30px 0 20px"></ui-icon>`);

define('moon-app', `<style>:host{display:flex;flex-direction:column;width:1920px;height:1080px;overflow:hidden}
.m{display:flex;flex:1;min-height:0}.x{width:6px;flex:none;background:#b2b2b2}.c{display:flex;flex-direction:column;flex:1;min-width:0}.r{display:flex;flex:1;min-height:0}.b{width:15px;background:#cacaca;border-top:6px solid #eee;box-sizing:border-box}</style>
<title-bar></title-bar><menu-bar></menu-bar><tool-bar></tool-bar>
<div class="m"><side-bar></side-bar><div class="x"></div><div class="c"><div class="r"><diagram-canvas></diagram-canvas><div class="b"></div></div><tab-strip></tab-strip></div><div class="x"></div><properties-rail></properties-rail></div>
<status-bar></status-bar><task-bar></task-bar>`);
</script>
</body>
</html>
